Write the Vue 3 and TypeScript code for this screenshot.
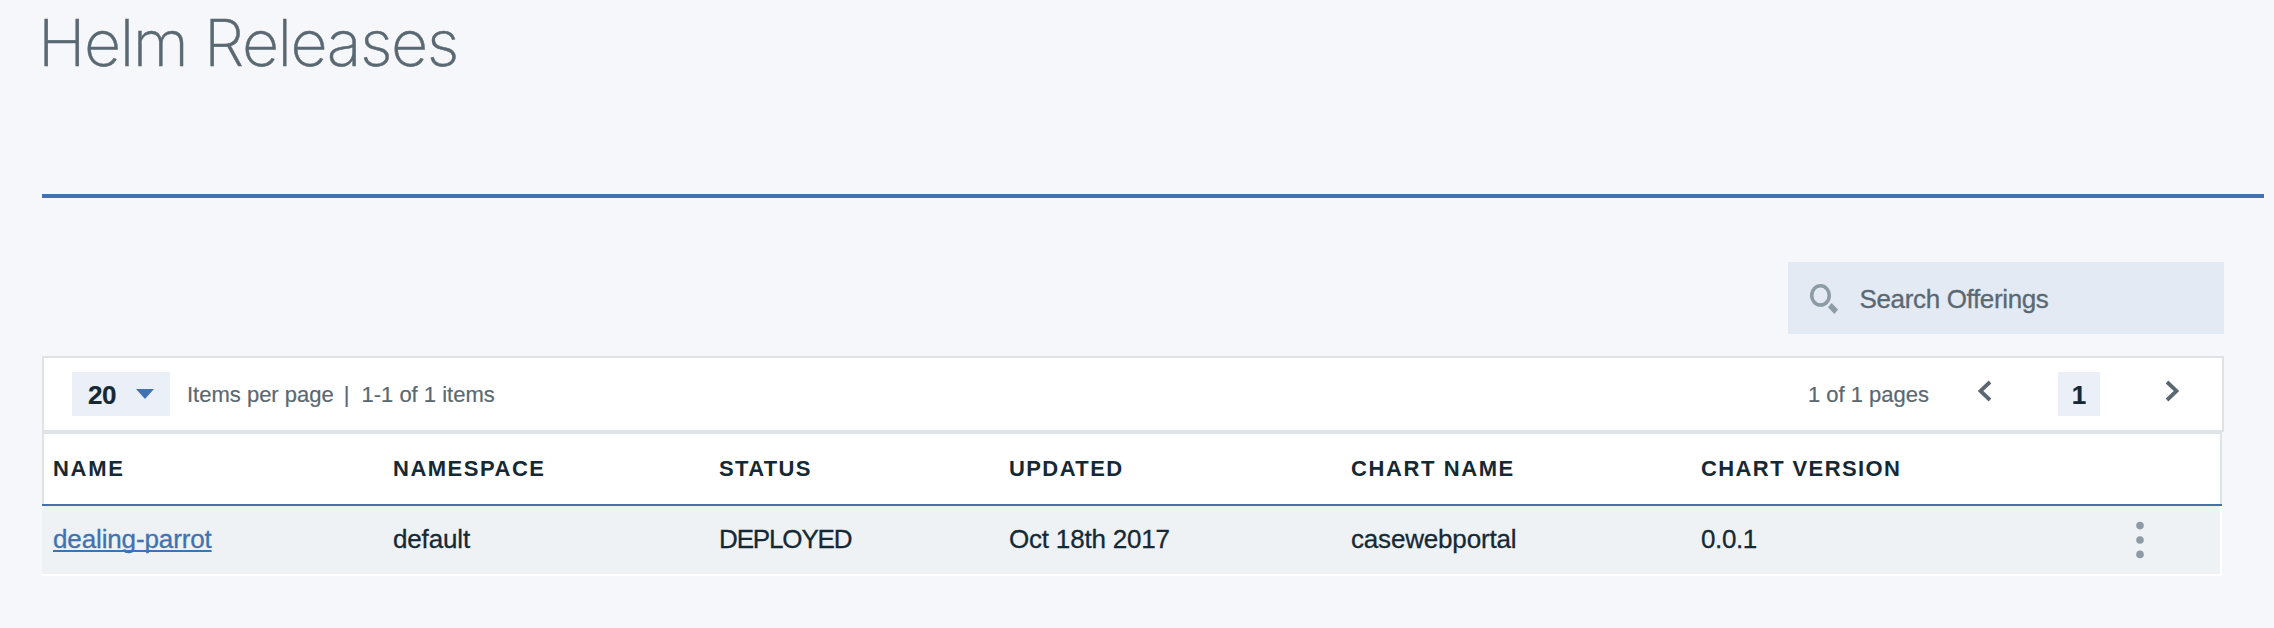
<script setup lang="ts">
interface Column {
  key: string
  label: string
}

interface Release {
  name: string
  namespace: string
  status: string
  updated: string
  chart: string
  version: string
}

const columns: Column[] = [
  { key: 'name', label: 'NAME' },
  { key: 'namespace', label: 'NAMESPACE' },
  { key: 'status', label: 'STATUS' },
  { key: 'updated', label: 'UPDATED' },
  { key: 'chart', label: 'CHART NAME' },
  { key: 'version', label: 'CHART VERSION' },
]

const releases: Release[] = [
  {
    name: 'dealing-parrot',
    namespace: 'default',
    status: 'DEPLOYED',
    updated: 'Oct 18th 2017',
    chart: 'casewebportal',
    version: '0.0.1',
  },
]
</script>

<template>
  <main class="page">
    <header class="page-header">
      <h1>Helm Releases</h1>
    </header>

    <div class="search">
      <svg class="search-icon" width="28" height="30" viewBox="0 0 28 30">
        <ellipse cx="10.5" cy="11.4" rx="8.8" ry="9.6" fill="none" stroke="#8c9ba5" stroke-width="3.6" />
        <path d="M21.6 19 L28 25.6 L24.4 30 L18 23.2 Z" fill="#8c9ba5" />
      </svg>
      <span class="search-text">Search Offerings</span>
    </div>

    <section class="toolbar">
      <button class="page-size">
        <span>20</span>
        <svg width="18" height="10" viewBox="0 0 18 10"><path d="M0 0H18L9 10Z" fill="#4071b1" /></svg>
      </button>
      <span class="per-page">Items per page</span>
      <span class="bar">|</span>
      <span class="range">1-1 of 1 items</span>
      <span class="page-count">1 of 1 pages</span>
      <svg class="arrow prev" width="14" height="22" viewBox="0 0 14 22">
        <path d="M12 2L2.4 11L12 20" fill="none" stroke="#5a6872" stroke-width="3.8" />
      </svg>
      <span class="current">1</span>
      <svg class="arrow next" width="14" height="22" viewBox="0 0 14 22">
        <path d="M2 2L11.6 11L2 20" fill="none" stroke="#5a6872" stroke-width="3.8" />
      </svg>
    </section>

    <section class="table">
      <div class="row head">
        <div v-for="c in columns" :key="c.key"><span :class="'h-' + c.key">{{ c.label }}</span></div>
      </div>
      <div v-for="r in releases" :key="r.name" class="row body">
        <div><a class="link">{{ r.name }}</a></div>
        <div class="namespace">{{ r.namespace }}</div>
        <div class="status">{{ r.status }}</div>
        <div class="updated">{{ r.updated }}</div>
        <div class="chart">{{ r.chart }}</div>
        <div class="version">{{ r.version }}</div>
        <svg class="more" width="8" height="38" viewBox="0 0 8 38">
          <circle cx="4" cy="4.6" r="3.8" />
          <circle cx="4" cy="19" r="3.8" />
          <circle cx="4" cy="33.4" r="3.8" />
        </svg>
      </div>
    </section>
  </main>
</template>

<style>
html,
body {
  background: #f5f7fb;
}
</style>

<style scoped>
.page {
  box-sizing: border-box;
  height: 628px;
  padding-left: 42px;
  overflow: hidden;
  background: #f5f7fb;
  font-family: "Liberation Sans", Arial, sans-serif;
  color: #152935;
}
.page-header {
  box-sizing: border-box;
  width: 2222px;
  height: 198px;
  border-bottom: 4px solid #4071b1;
}
h1 {
  margin: 0 0 0 -4px;
  padding-top: 4px;
  font-family: Inter, sans-serif;
  font-size: 64.5px;
  font-weight: 200;
  line-height: 78px;
  letter-spacing: -1.5px;
  color: #5a6872;
  -webkit-text-stroke: 0.5px #5a6872;
  white-space: nowrap;
}
.search {
  box-sizing: border-box;
  display: flex;
  width: 436px;
  height: 72px;
  margin: 64px 0 22px 1746px;
  padding-left: 22px;
  background: #e3eaf4;
  color: #5a6872;
  font-size: 26px;
  line-height: 74px;
  -webkit-text-stroke: 0.3px currentColor;
}
.search-icon {
  margin-top: 22px;
}
.search-icon,
.arrow,
.more {
  -webkit-text-stroke: 0;
}
.search-text {
  margin-left: 21.5px;
  letter-spacing: -0.35px;
}
.toolbar {
  box-sizing: border-box;
  display: flex;
  width: 2182px;
  height: 76px;
  padding: 14px 43px 0 28px;
  border: 2px solid #dfe3e6;
  background: #fff;
  font-size: 22px;
  line-height: 46px;
  color: #5a6872;
  white-space: nowrap;
  -webkit-text-stroke: 0.2px currentColor;
}
.page-size {
  box-sizing: border-box;
  display: flex;
  align-items: center;
  justify-content: space-between;
  width: 98px;
  height: 44px;
  padding: 0 16px;
  border: 0;
  background: #ebf0f8;
  color: #152935;
  font: bold 26px/44px "Liberation Sans", Arial, sans-serif;
  letter-spacing: -0.4px;
}
.page-size span {
  padding-top: 2px;
}
.per-page {
  margin-left: 17px;
}
.bar {
  margin-left: 10px;
}
.range {
  margin-left: 12px;
}
.page-count {
  margin-left: auto;
}
.arrow {
  margin-top: 8px;
}
.prev {
  margin-left: 49px;
}
.current {
  width: 42px;
  height: 44px;
  margin: 0 65px 0 66px;
  background: #ebeff8;
  color: #152935;
  font-size: 26px;
  font-weight: bold;
  text-align: center;
}
.table {
  width: 2180px;
}
.row {
  box-sizing: border-box;
  display: grid;
  grid-template-columns: 340px 326px 290px 342px 350px 1fr auto;
  white-space: nowrap;
}
.head {
  height: 72px;
  padding-left: 9px;
  border: 2px solid #dfe3e6;
  border-bottom: 0;
  background: #fff;
  box-shadow: 0 2px 0 #4071b1;
  font-size: 22px;
  font-weight: bold;
  line-height: 70px;
}
.h-name { letter-spacing: 1.7px; }
.h-namespace { letter-spacing: 1.5px; }
.h-status { letter-spacing: 1.35px; }
.h-updated { letter-spacing: 1.4px; }
.h-chart { letter-spacing: 1.6px; }
.h-version { letter-spacing: 1.4px; }
.body {
  height: 70px;
  margin-top: 2px;
  padding-left: 11px;
  padding-right: 76px;
  border-right: 2px solid #fff;
  border-bottom: 2px solid #fff;
  background: #eef2f5;
  font-size: 26px;
  line-height: 66px;
  -webkit-text-stroke: 0.3px currentColor;
}
.link {
  color: #4071b1;
  letter-spacing: -0.13px;
  text-decoration: underline;
  text-decoration-thickness: 2px;
  text-decoration-skip-ink: none;
  text-underline-offset: 2px;
}
.namespace { letter-spacing: -0.15px; }
.status { letter-spacing: -1.15px; }
.updated { letter-spacing: -0.2px; }
.chart { letter-spacing: -0.18px; }
.version { letter-spacing: -0.4px; }
.more {
  margin-top: 15px;
  fill: #8c9ba5;
}
</style>
